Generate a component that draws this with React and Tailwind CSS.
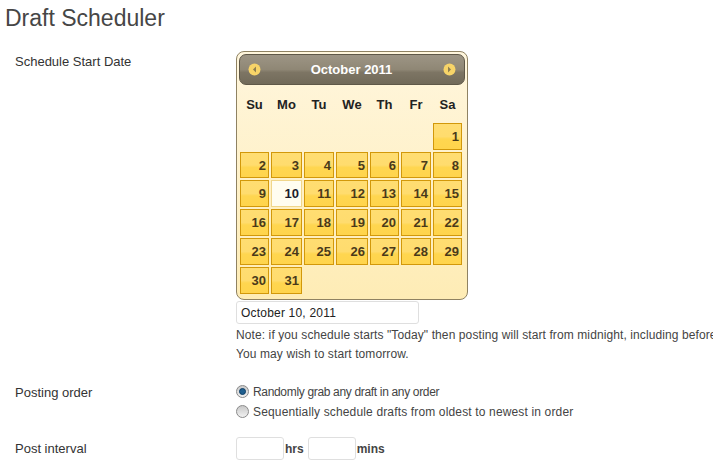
import React from "react";

const days = ["Su", "Mo", "Tu", "We", "Th", "Fr", "Sa"];
const dates = [
  null, null, null, null, null, null, 1,
  2, 3, 4, 5, 6, 7, 8,
  9, 10, 11, 12, 13, 14, 15,
  16, 17, 18, 19, 20, 21, 22,
  23, 24, 25, 26, 27, 28, 29,
  30, 31,
];

function NavButton({ dir }) {
  return (
    <svg width="13" height="13" viewBox="0 0 13 13">
      <circle cx="6.5" cy="6.5" r="6" fill="#f7d468" />
      <path d={dir === "left" ? "M8 3.5 L8 9.5 L5 6.5 Z" : "M5 3.5 L5 9.5 L8 6.5 Z"} fill="#8f7f4f" />
    </svg>
  );
}

function Radio({ checked }) {
  return (
    <span className="w-[13px] h-[13px] rounded-full border border-[#8a8a8a] bg-gradient-to-b from-[#c8c8c8] to-[#f2f2f2] flex items-center justify-center">
      {checked && <span className="w-[7px] h-[7px] rounded-full bg-[#1f5f8f] border border-[#0f3f66]" />}
    </span>
  );
}

export default function App() {
  return (
    <div className="w-[713px] h-[464px] overflow-hidden bg-white font-['Liberation_Sans',sans-serif] text-[12px] text-[#333]">
      <h2 className="pl-[5px] pt-[4px] text-[23px] leading-[28px] text-[#464646]">Draft Scheduler</h2>

      <div className="flex pl-[15px] pt-[19px]">
        <div className="w-[221px] text-[13px] leading-[18px] pt-[2px]">Schedule Start Date</div>
        <div className="w-[477px] overflow-hidden">
          <div className="w-[232px] h-[249px] border border-[#8f8262] rounded-[8px] bg-gradient-to-b from-[#fff6dd] to-[#feecb5] p-[2px]">
            <div className="h-[31px] rounded-[7px] border border-[#5f5848] bg-[linear-gradient(#9d9585,#8f8775_50%,#7d7564_60%,#716a59)] flex items-center justify-between px-[8px]">
              <NavButton dir="left" />
              <span className="text-[13px] font-bold text-white mr-[1px]">October 2011</span>
              <NavButton dir="right" />
            </div>
            <div className="grid grid-cols-[29px_31px_30px_32px_29px_30px_29px] gap-x-[2px] ml-[1px] mt-[7px] h-[26px] items-center text-center text-[13px] font-bold text-[#222]">
              {days.map((d) => (
                <span key={d}>{d}</span>
              ))}
            </div>
            <div className="grid grid-cols-[29px_31px_30px_32px_29px_30px_29px] grid-rows-[27px_26px_27px_27px_27px_27px] gap-[2px] ml-[1px] mt-[5px]">
              {dates.map((d, i) =>
                d === null ? (
                  <span key={i} />
                ) : (
                  <span
                    key={i}
                    className={
                      d === 10
                        ? "border border-[#f0d68a] bg-[#fffdf0] text-right pr-[2px] leading-[25px] text-[13px] font-bold text-[#1c1c2c]"
                        : "border border-[#d2980a] bg-[linear-gradient(#ffdd72,#ffdc6e_50%,#ffd650_60%,#ffd44c)] text-right pr-[2px] leading-[25px] text-[13px] font-bold text-[#4a3a1a]"
                    }
                  >
                    {d}
                  </span>
                )
              )}
            </div>
          </div>
          <div className="w-[183px] h-[23px] mt-[1px] border border-[#dfdfdf] rounded-[3px] pl-[4px] leading-[23px] text-[12px] tracking-[0.2px] text-[#222]">
            October 10, 2011
          </div>
          <p className="whitespace-nowrap leading-[19px] mt-[2px] text-[#444] text-[12px] tracking-[0.1px]">
            Note: if you schedule starts "Today" then posting will start from midnight, including before
            <br />
            You may wish to start tomorrow.
          </p>
        </div>
      </div>

      <div className="flex pl-[15px] pt-[19px]">
        <div className="w-[221px] text-[13px] leading-[18px] pt-[1px]">Posting order</div>
        <div className="flex flex-col gap-[3px] text-[12px] text-[#444]">
          <label className="flex items-center gap-[4px] h-[17px] tracking-[-0.33px]"><Radio checked />Randomly grab any draft in any order</label>
          <label className="flex items-center gap-[4px] h-[17px] tracking-[0.15px]"><Radio />Sequentially schedule drafts from oldest to newest in order</label>
        </div>
      </div>

      <div className="flex pl-[15px] pt-[17px]">
        <div className="w-[221px] text-[13px] leading-[18px] pt-[3px]">Post interval</div>
        <div className="flex items-center font-bold text-[#444]">
          <span className="w-[48px] h-[23px] border border-[#dfdfdf] rounded-[3px]" />
          <span className="ml-[1px] mr-[4px]">hrs</span>
          <span className="w-[48px] h-[23px] border border-[#dfdfdf] rounded-[3px]" />
          <span className="ml-[1px]">mins</span>
        </div>
      </div>
    </div>
  );
}
